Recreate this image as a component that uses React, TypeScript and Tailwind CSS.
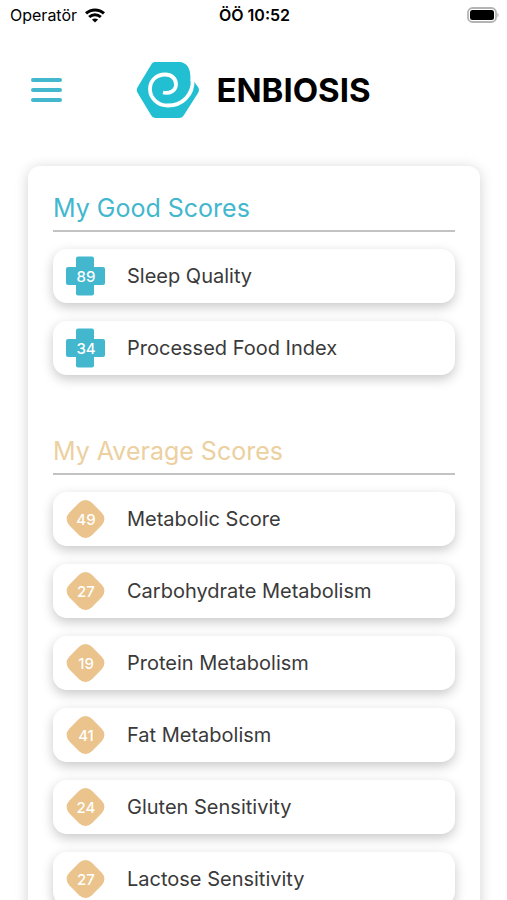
import React from 'react';

type Level = 'good' | 'average';

type Score = {
  name: string;
  value: number;
};

const goodScores: Score[] = [
  { name: 'Sleep Quality', value: 89 },
  { name: 'Processed Food Index', value: 34 },
];

const averageScores: Score[] = [
  { name: 'Metabolic Score', value: 49 },
  { name: 'Carbohydrate Metabolism', value: 27 },
  { name: 'Protein Metabolism', value: 19 },
  { name: 'Fat Metabolism', value: 41 },
  { name: 'Gluten Sensitivity', value: 24 },
  { name: 'Lactose Sensitivity', value: 27 },
];

const StatusBar = () => (
  <div className="grid h-[30px] grid-cols-3 items-center pl-[10px] pr-2 text-base text-black">
    <div className="flex items-center gap-2">
      <span>Operatör</span>
      <svg width="20" height="15" viewBox="0 0 20 15" fill="none" stroke="#000" strokeWidth="3">
        <path d="M1 5.4C6 .7 14 .7 19 5.4" />
        <path d="M4.2 9C7.5 5.9 12.5 5.9 15.8 9" />
        <path d="M10 14.6L6.9 11.6C8.7 10 11.3 10 13.1 11.6Z" fill="#000" stroke="none" />
      </svg>
    </div>
    <span className="text-center font-semibold">ÖÖ 10:52</span>
    <svg className="justify-self-end" width="33" height="17" viewBox="0 0 33 17">
      <rect x="2" y="1" width="28" height="14" rx="4.5" fill="#fff" stroke="#b4b4b4" strokeWidth="1.8" />
      <rect x="4" y="3" width="24" height="10" rx="2.5" fill="#000" />
      <path d="M31.4 5.7C33 6.4 33 9.6 31.4 10.3Z" fill="#b4b4b4" />
    </svg>
  </div>
);

const Logo = () => (
  <div className="flex items-center gap-4">
    <svg width="64" height="58" viewBox="0 0 64 58">
      <path
        d="M19 1H44C49 1.5 52.5 5 53.7 10C54.4 13 54.5 16 54.4 20L58 20.5L62 26C63.3 28 63.3 30 62 32L48 54C46.8 56 45.5 57 43 57H20C17.5 57 16.2 56 15 54L1.7 32C.4 30 .4 28 1.7 26L15 4C16.2 2 17 1 19 1Z"
        fill="#22bfd3"
      />
      <path
        d="M27 31.5C34 33 40 29.5 40 23.5C40 17.5 35.5 13.5 29 13.5C20 13.5 14 20 14 28C14 37.5 22 44.5 32 44.5C46 44.5 57.5 34 56.6 18.5"
        fill="none"
        stroke="#fff"
        strokeWidth="3.8"
      />
    </svg>
    <span className="text-[33px] font-bold leading-10 text-black">ENBIOSIS</span>
  </div>
);

const Badge = ({ level, value }: { level: Level; value: number }) => (
  <div className="grid size-10 place-items-center">
    <svg className="col-start-1 row-start-1" width="40" height="40" viewBox="0 0 40 40">
      {level === 'good' ? (
        <g fill="#43b7ce">
          <rect x="10" y="0.5" width="18" height="39" rx="2" />
          <rect x="0" y="11" width="39" height="18" rx="2" />
        </g>
      ) : (
        <rect x="3.5" y="4" width="32" height="32" rx="9" fill="#eac48c" transform="rotate(45 19.5 20)" />
      )}
    </svg>
    <span className="z-10 col-start-1 row-start-1 pt-[2px] text-[15px] font-medium leading-5 text-white">{value}</span>
  </div>
);

const ScoreSection = ({ title, level, scores }: { title: string; level: Level; scores: Score[] }) => (
  <section>
    <h2
      className={
        level === 'good'
          ? 'border-b-2 border-[#c2c2c2] pb-[6px] text-[25px] leading-8 text-[#43b7ce]'
          : 'border-b-2 border-[#c2c2c2] pb-[6px] text-[25px] leading-8 text-[#ecd09f]'
      }
    >
      {title}
    </h2>
    <ul className="mt-[17px] flex flex-col gap-[18px]">
      {scores.map((score) => (
        <li key={score.name}>
          <button
            type="button"
            className="flex h-[54px] w-full items-center gap-[21px] rounded-[14px] bg-white px-[13px] text-left text-xl text-[#3a3a3a] shadow-[0_4px_12px_rgba(0,0,0,0.22)]"
          >
            <Badge level={level} value={score.value} />
            <span>{score.name}</span>
          </button>
        </li>
      ))}
    </ul>
  </section>
);

const App = () => {
  return (
    <div className="flex h-screen flex-col overflow-hidden bg-white font-['Inter',sans-serif]">
      <StatusBar />
      <header className="grid h-[120px] grid-cols-[1fr_auto_1fr] items-center px-[31px]">
        <button type="button" aria-label="Menu" className="flex w-[31px] flex-col gap-[6px]">
          <span className="h-1 rounded-full bg-[#43b7ce]" />
          <span className="h-1 rounded-full bg-[#43b7ce]" />
          <span className="h-1 rounded-full bg-[#43b7ce]" />
        </button>
        <Logo />
      </header>
      <main className="min-h-0 flex-1 overflow-y-auto pb-6 pl-7 pr-[27px] pt-4 [scrollbar-width:none]">
        <div className="flex flex-col gap-[60px] rounded-xl bg-white px-[25px] pb-8 pt-[26px] shadow-[0_2px_14px_rgba(0,0,0,0.18)]">
          <ScoreSection title="My Good Scores" level="good" scores={goodScores} />
          <ScoreSection title="My Average Scores" level="average" scores={averageScores} />
        </div>
      </main>
    </div>
  );
};

export default App;
